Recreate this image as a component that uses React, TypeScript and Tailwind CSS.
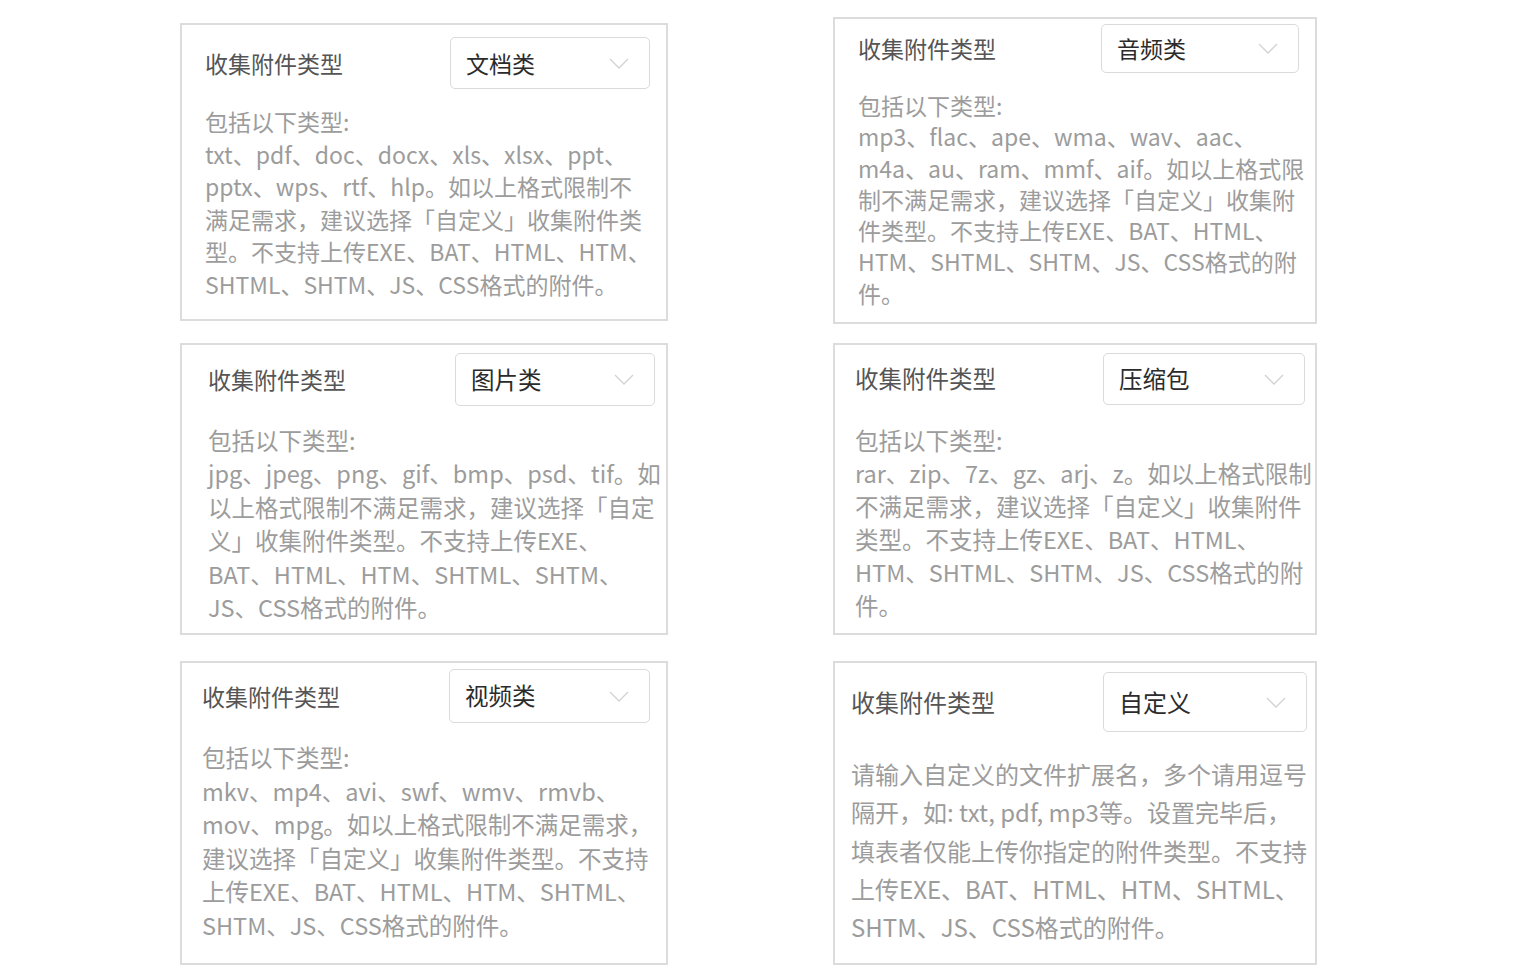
import React from 'react';

type CardProps = {
  value: string;
  lines: string[];
  box: string;
  head: string;
  title: string;
  select: string;
  valueText: string;
  body: string;
};

const Chevron = () => (
  <svg width="20" height="11" viewBox="0 0 20 11" fill="none" className="shrink-0">
    <path d="M1 1L10 10L19 1" stroke="#d2d2d2" strokeWidth="1.3" />
  </svg>
);

const TypeCard = ({ value, lines, box, head, title, select, valueText, body }: CardProps) => (
  <div className={`border-2 border-[#dcdcdc] bg-white ${box}`}>
    <div className={`flex items-center justify-between ${head}`}>
      <span className={`text-[#555] ${title}`}>收集附件类型</span>
      <div className={`flex items-center justify-between border border-[#dadada] rounded-[5px] pl-[15px] pr-[20px] ${select}`}>
        <span className={`text-[#2b2b2b] ${valueText}`}>{value}</span>
        <Chevron />
      </div>
    </div>
    <div className={`text-[#9c9c9c] ${body}`}>
      {lines.map((l, i) => (
        <div key={i} className="whitespace-nowrap">{l}</div>
      ))}
    </div>
  </div>
);

export default function App() {
  return (
    <div className="min-h-[980px] bg-white font-['Noto_Sans_CJK_SC','Microsoft_YaHei',sans-serif] flex pl-[180px]">
      <div className="w-[488px] flex flex-col pt-[23px]">
        <TypeCard
          value="文档类"
          box="h-[298px]"
          head="pt-[12px] pl-[23px] pr-[16px]"
          title="text-[23px]"
          select="w-[200px] h-[52px]"
          valueText="text-[23px]"
          body="mt-[16px] pl-[23px] text-[23px] leading-[32.5px]"
          lines={[
            '包括以下类型:',
            'txt、pdf、doc、docx、xls、xlsx、ppt、',
            'pptx、wps、rtf、hlp。如以上格式限制不',
            '满足需求，建议选择「自定义」收集附件类',
            '型。不支持上传EXE、BAT、HTML、HTM、',
            'SHTML、SHTM、JS、CSS格式的附件。',
          ]}
        />
        <div className="mt-[22px]">
          <TypeCard
            value="图片类"
            box="h-[292px]"
            head="pt-[8px] pl-[26px] pr-[11px]"
            title="text-[23px]"
            select="w-[200px] h-[53px]"
            valueText="text-[23.5px]"
            body="mt-[18px] pl-[26px] text-[23.5px] leading-[33.4px]"
            lines={[
              '包括以下类型:',
              'jpg、jpeg、png、gif、bmp、psd、tif。如',
              '以上格式限制不满足需求，建议选择「自定',
              '义」收集附件类型。不支持上传EXE、',
              'BAT、HTML、HTM、SHTML、SHTM、',
              'JS、CSS格式的附件。',
            ]}
          />
        </div>
        <div className="mt-[26px]">
          <TypeCard
            value="视频类"
            box="h-[304px]"
            head="pt-[6px] pl-[20px] pr-[16px]"
            title="text-[23px]"
            select="w-[201px] h-[54px]"
            valueText="text-[23.5px]"
            body="mt-[18px] pl-[20px] text-[23.5px] leading-[33.6px]"
            lines={[
              '包括以下类型:',
              'mkv、mp4、avi、swf、wmv、rmvb、',
              'mov、mpg。如以上格式限制不满足需求，',
              '建议选择「自定义」收集附件类型。不支持',
              '上传EXE、BAT、HTML、HTM、SHTML、',
              'SHTM、JS、CSS格式的附件。',
            ]}
          />
        </div>
      </div>

      <div className="w-[484px] ml-[165px] flex flex-col pt-[17px]">
        <TypeCard
          value="音频类"
          box="h-[307px]"
          head="pt-[5px] pl-[23px] pr-[16px]"
          title="text-[23px]"
          select="w-[198px] h-[49px]"
          valueText="text-[23px]"
          body="mt-[17px] pl-[23px] text-[23px] leading-[31.3px]"
          lines={[
            '包括以下类型:',
            'mp3、flac、ape、wma、wav、aac、',
            'm4a、au、ram、mmf、aif。如以上格式限',
            '制不满足需求，建议选择「自定义」收集附',
            '件类型。不支持上传EXE、BAT、HTML、',
            'HTM、SHTML、SHTM、JS、CSS格式的附',
            '件。',
          ]}
        />
        <div className="mt-[19px]">
          <TypeCard
            value="压缩包"
            box="h-[292px]"
            head="pt-[8px] pl-[20px] pr-[10px]"
            title="text-[23.5px]"
            select="w-[202px] h-[52px]"
            valueText="text-[23.5px]"
            body="mt-[19px] pl-[20px] text-[23.5px] leading-[33px]"
            lines={[
              '包括以下类型:',
              'rar、zip、7z、gz、arj、z。如以上格式限制',
              '不满足需求，建议选择「自定义」收集附件',
              '类型。不支持上传EXE、BAT、HTML、',
              'HTM、SHTML、SHTM、JS、CSS格式的附',
              '件。',
            ]}
          />
        </div>
        <div className="mt-[26px]">
          <TypeCard
            value="自定义"
            box="h-[304px]"
            head="pt-[9px] pl-[16px] pr-[8px]"
            title="text-[24px]"
            select="w-[204px] h-[60px]"
            valueText="text-[24px]"
            body="mt-[23px] pl-[16px] text-[24px] leading-[38.3px]"
            lines={[
              '请输入自定义的文件扩展名，多个请用逗号',
              '隔开，如: txt, pdf, mp3等。设置完毕后，',
              '填表者仅能上传你指定的附件类型。不支持',
              '上传EXE、BAT、HTML、HTM、SHTML、',
              'SHTM、JS、CSS格式的附件。',
            ]}
          />
        </div>
      </div>
    </div>
  );
}
